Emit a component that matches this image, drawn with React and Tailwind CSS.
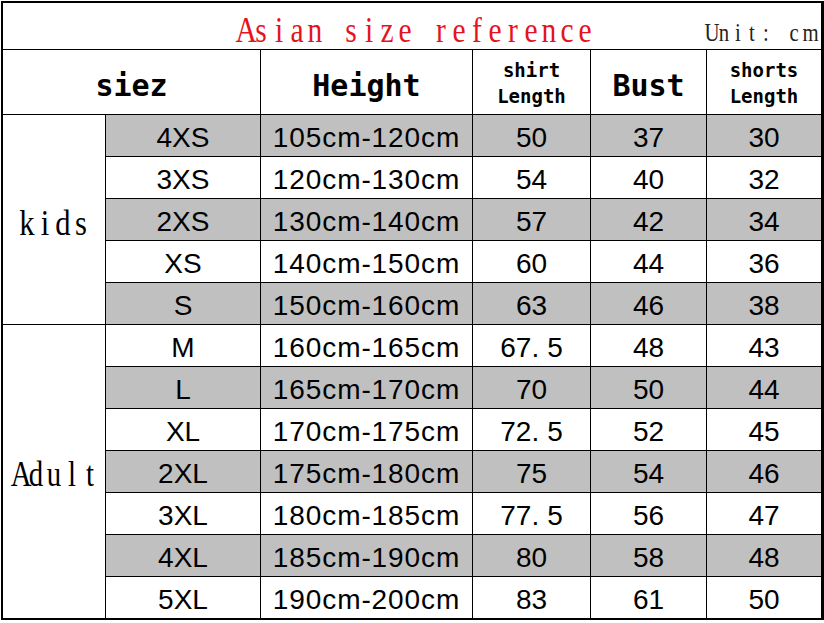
import React from "react";

const rows = [
  ["4XS", "105cm-120cm", "50", "37", "30"],
  ["3XS", "120cm-130cm", "54", "40", "32"],
  ["2XS", "130cm-140cm", "57", "42", "34"],
  ["XS", "140cm-150cm", "60", "44", "36"],
  ["S", "150cm-160cm", "63", "46", "38"],
  ["M", "160cm-165cm", "67.5", "48", "43"],
  ["L", "165cm-170cm", "70", "50", "44"],
  ["XL", "170cm-175cm", "72.5", "52", "45"],
  ["2XL", "175cm-180cm", "75", "54", "46"],
  ["3XL", "180cm-185cm", "77.5", "56", "47"],
  ["4XL", "185cm-190cm", "80", "58", "48"],
  ["5XL", "190cm-200cm", "83", "61", "50"],
];

function Num({ v }) {
  if (v.includes(".")) {
    const [a, b] = v.split(".");
    return (
      <span>
        {a}
        <span className="mr-[8px]">.</span>
        {b}
      </span>
    );
  }
  return <span>{v}</span>;
}

/* Monospaced serif text: each character sits in a fixed-width cell */
function MonoSerif({ text, cell, className }) {
  return (
    <span className={`inline-flex whitespace-pre ${className}`}>
      {text.split("").map((ch, i) => (
        <span key={i} className={`inline-block text-center ${cell}`}>
          {ch}
        </span>
      ))}
    </span>
  );
}

const dataFont = "font-['Liberation_Sans',Arial,sans-serif] text-[28px] leading-none text-black";
const headFont = "font-['DejaVu_Sans_Mono',monospace] font-bold text-black";
const serif = "font-['Liberation_Serif','Times_New_Roman',serif]";

export default function App() {
  return (
    <div className="w-[824px] h-[623px] bg-white">
      <div className="ml-px mt-px w-[823px] border-t-2 border-b-2 border-l-2 border-r-[3px] border-black">
        {/* Title row */}
        <div className="h-[47px] border-b border-black bg-white grid grid-cols-[1fr_auto_1fr] items-start">
          <div />
          <div className="pt-[9px] pl-[3px]">
            <MonoSerif
              text="Asian size reference"
              cell="w-[18px] scale-x-[0.82]"
              className={`${serif} text-[36px] leading-none text-[#e4141c]`}
            />
          </div>
          <div className="flex justify-end pt-[17px] pr-[6px]">
            <MonoSerif
              text="Unit: cm"
              cell="w-[14px] scale-x-[0.8]"
              className={`${serif} text-[26px] leading-none text-[#222]`}
            />
          </div>
        </div>

        {/* Table grid */}
        <div className="grid grid-cols-[102px_154px_211px_117px_115px_114px] grid-rows-[64px_repeat(12,41px)] gap-px bg-black">
          <div className="col-span-2 bg-white flex items-center justify-center pt-[7px]">
            <span className={`${headFont} text-[30px] leading-none`}>siez</span>
          </div>
          <div className="bg-white flex items-center justify-center pt-[7px]">
            <span className={`${headFont} text-[30px] leading-none`}>Height</span>
          </div>
          <div className="bg-white flex flex-col items-center justify-center pt-[2px]">
            <span className={`${headFont} text-[19px] leading-[26px]`}>shirt</span>
            <span className={`${headFont} text-[19px] leading-[26px]`}>Length</span>
          </div>
          <div className="bg-white flex items-center justify-center pt-[7px]">
            <span className={`${headFont} text-[30px] leading-none`}>Bust</span>
          </div>
          <div className="bg-white flex flex-col items-center justify-center pt-[2px]">
            <span className={`${headFont} text-[19px] leading-[26px]`}>shorts</span>
            <span className={`${headFont} text-[19px] leading-[26px]`}>Length</span>
          </div>

          {rows.map((r, i) => {
            const bg = i % 2 === 0 ? "bg-[#c0c0c0]" : "bg-white";
            return (
              <React.Fragment key={r[0]}>
                {i === 0 && (
                  <div className="row-span-5 bg-white flex items-center justify-center pt-[6px]">
                    <MonoSerif
                      text="kids"
                      cell="w-[18px] scale-x-[0.85]"
                      className={`${serif} text-[36px] leading-none text-black`}
                    />
                  </div>
                )}
                {i === 5 && (
                  <div className="row-span-7 bg-white flex items-center justify-center pt-[5px]">
                    <MonoSerif
                      text="Adult"
                      cell="w-[18px] scale-x-[0.8]"
                      className={`${serif} text-[36px] leading-none text-black`}
                    />
                  </div>
                )}
                <div className={`${bg} flex items-center justify-center pt-[4px]`}>
                  <span className={dataFont}>{r[0]}</span>
                </div>
                <div className={`${bg} flex items-center justify-center pt-[4px]`}>
                  <span className={`${dataFont} whitespace-nowrap tracking-[0.9px]`}>{r[1]}</span>
                </div>
                <div className={`${bg} flex items-center justify-center pt-[4px]`}>
                  <span className={dataFont}>
                    <Num v={r[2]} />
                  </span>
                </div>
                <div className={`${bg} flex items-center justify-center pt-[4px]`}>
                  <span className={dataFont}>{r[3]}</span>
                </div>
                <div className={`${bg} flex items-center justify-center pt-[4px]`}>
                  <span className={dataFont}>{r[4]}</span>
                </div>
              </React.Fragment>
            );
          })}
        </div>
      </div>
    </div>
  );
}
